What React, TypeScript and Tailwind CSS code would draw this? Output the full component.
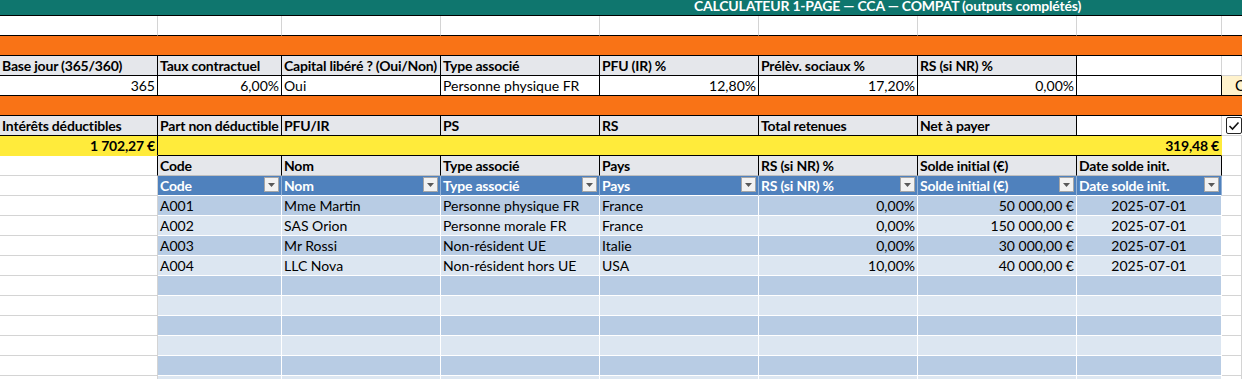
import type { ReactNode } from 'react';

const COLS = "grid grid-cols-[158px_124px_159px_159px_159px_159px_159px_145px_1fr]";
const GRID = "border-r border-b border-[#d4d4d4]";
const BLK = "border-r border-b border-black";

interface CellProps {
  c?: string;
  children?: ReactNode;
}

function Cell({ c = "", children }: CellProps) {
  return (
    <div className={"flex items-end overflow-hidden whitespace-nowrap px-[2px] pb-[2px] leading-none " + c}>
      {children}
    </div>
  );
}

function Filter() {
  return (
    <span className="ml-auto self-center flex h-[15px] w-[15px] shrink-0 items-center justify-center border border-[#a6a6a6] bg-[#f2f2f2]">
      <svg width="7" height="4" viewBox="0 0 7 4">
        <path d="M0 0h7L3.5 4z" fill="#595959" />
      </svg>
    </span>
  );
}

const rows = [
  ["A001", "Mme Martin", "Personne physique FR", "France", "0,00%", "50 000,00 €", "2025-07-01"],
  ["A002", "SAS Orion", "Personne morale FR", "France", "0,00%", "150 000,00 €", "2025-07-01"],
  ["A003", "Mr Rossi", "Non-résident UE", "Italie", "0,00%", "30 000,00 €", "2025-07-01"],
  ["A004", "LLC Nova", "Non-résident hors UE", "USA", "10,00%", "40 000,00 €", "2025-07-01"],
  ["", "", "", "", "", "", ""],
  ["", "", "", "", "", "", ""],
  ["", "", "", "", "", "", ""],
  ["", "", "", "", "", "", ""],
  ["", "", "", "", "", "", ""],
  ["", "", "", "", "", "", ""],
];

const tableHead = ["Code", "Nom", "Type associé", "Pays", "RS (si NR) %", "Solde initial (€)", "Date solde init."];

export default function App() {
  return (
    <div className="h-[379px] w-[1242px] overflow-hidden bg-white font-['Lato',sans-serif] text-[14px] text-black">
      {/* title */}
      <div className="flex h-[16px] items-end overflow-hidden border-b border-black bg-[#0f766e] pb-[2px] pl-[694px] font-bold leading-none tracking-[-0.2px] whitespace-nowrap text-white">
        CALCULATEUR 1-PAGE — CCA — COMPAT (outputs complétés)
      </div>

      {/* blank row */}
      <div className={COLS + " h-[20px]"}>
        <Cell c="border-r border-b border-r-[#d4d4d4] border-b-black" />
        <Cell c="border-r border-b border-r-[#d4d4d4] border-b-black" />
        <Cell c="border-r border-b border-r-[#d4d4d4] border-b-black" />
        <Cell c="border-r border-b border-r-[#d4d4d4] border-b-black" />
        <Cell c="border-r border-b border-r-[#d4d4d4] border-b-black" />
        <Cell c="border-r border-b border-r-[#d4d4d4] border-b-black" />
        <Cell c="border-r border-b border-r-[#d4d4d4] border-b-black" />
        <Cell c="border-r border-b border-r-[#d4d4d4] border-b-black" />
        <Cell c="border-b border-black" />
      </div>

      <div className="h-[20px] border-b border-black bg-[#f97316]" />

      {/* paramètres */}
      <div className={COLS + " h-[20px] font-bold tracking-[-0.2px]"}>
        <Cell c={"bg-[#e5e7eb] " + BLK}>Base jour (365/360)</Cell>
        <Cell c={"bg-[#e5e7eb] " + BLK}>Taux contractuel</Cell>
        <Cell c={"bg-[#e5e7eb] " + BLK}>Capital libéré ? (Oui/Non)</Cell>
        <Cell c={"bg-[#e5e7eb] " + BLK}>Type associé</Cell>
        <Cell c={"bg-[#e5e7eb] " + BLK}>PFU (IR) %</Cell>
        <Cell c={"bg-[#e5e7eb] " + BLK}>Prélèv. sociaux %</Cell>
        <Cell c={"bg-[#e5e7eb] " + BLK}>RS (si NR) %</Cell>
        <Cell c="border-r border-b border-r-[#d4d4d4] border-b-black" />
        <Cell c={GRID} />
      </div>
      <div className={COLS + " h-[20px]"}>
        <Cell c={"justify-end " + BLK}>365</Cell>
        <Cell c={"justify-end " + BLK}>6,00%</Cell>
        <Cell c={BLK}>Oui</Cell>
        <Cell c={BLK}>Personne physique FR</Cell>
        <Cell c={"justify-end " + BLK}>12,80%</Cell>
        <Cell c={"justify-end " + BLK}>17,20%</Cell>
        <Cell c={"justify-end " + BLK}>0,00%</Cell>
        <Cell c={BLK} />
        <div className="overflow-hidden border-b border-black bg-[#fff2cc]">
          <div className="flex h-full w-[120px] items-end pb-[2px] pl-[13px] text-[15px] leading-none whitespace-nowrap">
            Contrôles
          </div>
        </div>
      </div>

      <div className="h-[20px] border-b border-black bg-[#f97316]" />

      {/* résultats */}
      <div className={COLS + " h-[20px] font-bold tracking-[-0.2px]"}>
        <Cell c={"bg-[#e5e7eb] " + BLK}>Intérêts déductibles</Cell>
        <Cell c={"bg-[#e5e7eb] " + BLK}>Part non déductible</Cell>
        <Cell c={"bg-[#e5e7eb] " + BLK}>PFU/IR</Cell>
        <Cell c={"bg-[#e5e7eb] " + BLK}>PS</Cell>
        <Cell c={"bg-[#e5e7eb] " + BLK}>RS</Cell>
        <Cell c={"bg-[#e5e7eb] " + BLK}>Total retenues</Cell>
        <Cell c={"bg-[#e5e7eb] " + BLK}>Net à payer</Cell>
        <Cell c="border-r border-b border-r-[#d4d4d4] border-b-black" />
        <div className="border-b border-[#d4d4d4] pl-[4px] pt-[1px]">
          <span className="flex h-[17px] w-[16px] items-center justify-center rounded-[2px] border border-[#262626] bg-white">
            <svg width="12" height="10" viewBox="0 0 12 10">
              <path d="M1.5 5l3 3L10.5 1.5" fill="none" stroke="#111" strokeWidth="1.6" />
            </svg>
          </span>
        </div>
      </div>
      <div className={COLS + " h-[20px] font-bold tracking-[-0.2px]"}>
        <Cell c="justify-end border-r border-b border-r-black border-b-[#ffeb3b] bg-[#ffeb3b]">1 702,27 €</Cell>
        <Cell c="col-span-7 justify-end border-r border-b border-r-[#ffeb3b] border-b-black bg-[#ffeb3b]">319,48 €</Cell>
        <Cell c={GRID} />
      </div>

      {/* tableau associés */}
      <div className={COLS + " h-[20px] font-bold tracking-[-0.2px]"}>
        <Cell c="border-r border-b border-r-black border-b-[#d4d4d4]" />
        {tableHead.map((h) => (
          <Cell key={h} c="border-r border-b border-r-black border-b-[#bfbfbf] bg-[#e5e7eb]">
            {h}
          </Cell>
        ))}
        <Cell c={GRID} />
      </div>
      <div className={COLS + " h-[20px] font-bold tracking-[-0.2px]"}>
        <Cell c={GRID} />
        {tableHead.map((h) => (
          <Cell key={h} c="border-r border-b border-r-[#95b3d7] border-b-white bg-[#4f81bd] text-white">
            <span>{h}</span>
            <Filter />
          </Cell>
        ))}
        <Cell c={GRID} />
      </div>
      {rows.map((r, i) => {
        const bg = i % 2 === 0 ? "bg-[#b8cce4]" : "bg-[#dce6f1]";
        return (
          <div key={i} className={COLS + " h-[20px]"}>
            <Cell c={GRID} />
            <Cell c={"border-r border-b border-white " + bg}>{r[0]}</Cell>
            <Cell c={"border-r border-b border-white " + bg}>{r[1]}</Cell>
            <Cell c={"border-r border-b border-white " + bg}>{r[2]}</Cell>
            <Cell c={"border-r border-b border-white " + bg}>{r[3]}</Cell>
            <Cell c={"justify-end border-r border-b border-white " + bg}>{r[4]}</Cell>
            <Cell c={"justify-end border-r border-b border-white " + bg}>{r[5]}</Cell>
            <Cell c={"justify-center border-r border-b border-white " + bg}>{r[6]}</Cell>
            <Cell c={GRID} />
          </div>
        );
      })}
    </div>
  );
}
